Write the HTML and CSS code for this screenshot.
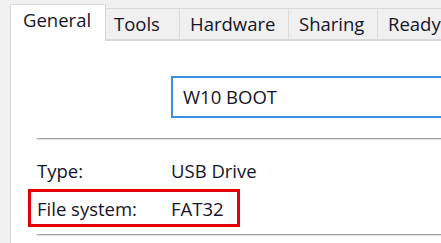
FILE: index.html
```html
<!DOCTYPE html>
<html>
<head>
<meta charset="utf-8">
<link rel="stylesheet" href="styles.css">
</head>
<body>
<div class="window">
  <div class="tabs">
    <div class="tab active">General</div>
    <div class="tab t-tools">Tools</div>
    <div class="tab t-hw">Hardware</div>
    <div class="tab t-share">Sharing</div>
    <div class="tab t-ready">ReadyBoost</div>
  </div>
  <div class="panel">
    <div class="name-row">
      <div class="name-input">W10 BOOT</div>
    </div>
    <div class="sep"></div>
    <div class="prop-row">
      <span class="label">Type:</span><span class="value">USB Drive</span>
    </div>
    <div class="prop-row fs">
      <div class="highlight">
        <span class="label">File system:</span><span class="value">FAT32</span>
      </div>
    </div>
    <div class="sep sep2"></div>
  </div>
</div>
</body>
</html>
```
FILE: styles.css
```css
html, body {
  margin: 0;
  padding: 0;
  background: #f0f0f0;
  overflow: hidden;
}
body {
  width: 441px;
  height: 243px;
  font-family: "Open Sans", "Noto Sans", sans-serif;
  font-size: 18.5px;
  color: #141428;
}
.window {
  padding-left: 10px;
}
.tabs {
  display: flex;
  align-items: flex-end;
  height: 41px;
  position: relative;
  z-index: 2;
  white-space: nowrap;
  overflow: hidden;
}
.tab {
  box-sizing: border-box;
  height: 32px;
  margin-bottom: 1px;
  border: 1px solid #d9d9d9;
  border-left: none;
  background: #f0f0f0;
  padding-left: 8px;
  line-height: 29px;
  flex: none;
}
.tab.active {
  height: 37px;
  margin-bottom: 0;
  border: 1px solid #d9d9d9;
  border-bottom: none;
  background: #fff;
  width: 96px;
  padding-left: 12px;
  line-height: 30px;
}
.t-tools { width: 74px; }
.t-hw { width: 109px; padding-left: 10px; }
.t-share { width: 89px; padding-left: 10px; }
.t-ready { width: 120px; padding-left: 10px; }
.panel {
  background: #fff;
  border-left: 1px solid #d9d9d9;
  border-top: 1px solid #d9d9d9;
  margin-top: -1px;
  height: 210px;
  padding-left: 26px;
}
.name-row {
  padding-top: 35px;
  padding-left: 134px;
}
.name-input {
  box-sizing: border-box;
  height: 42px;
  border: 2px solid #3d8fe2;
  border-right: none;
  padding-left: 10px;
  line-height: 37px;
}
.sep {
  margin-top: 20px;
  height: 1px;
  background: #a0a0a0;
  border-bottom: 1px solid #e3e3e3;
}
.prop-row {
  display: flex;
  height: 37px;
  line-height: 38px;
  margin-top: 12px;
}
.prop-row.fs {
  margin-top: 0;
}
.label {
  display: inline-block;
  width: 134px;
}
.highlight {
  box-sizing: border-box;
  margin-left: -9px;
  padding-left: 6px;
  width: 212px;
  height: 38px;
  line-height: 34px;
  border: 3px solid #e60000;
}
.sep2 {
  margin-top: 8px;
}
```
